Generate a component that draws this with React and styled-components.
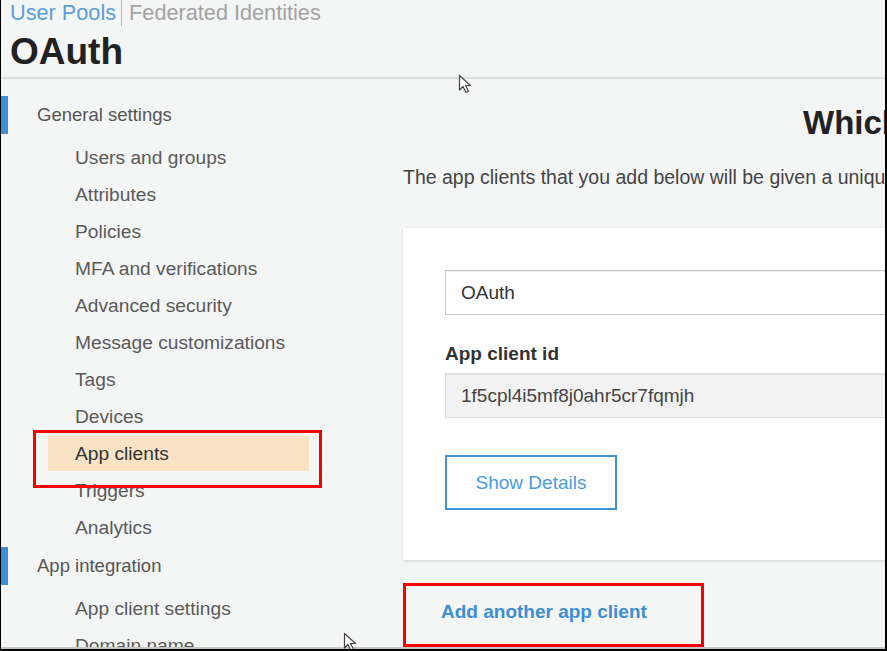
import React from 'react';
import styled, { createGlobalStyle } from 'styled-components';

const GlobalStyle = createGlobalStyle`
  body {
    margin: 0;
    background: #fff;
    font-family: "Liberation Sans", Arial, sans-serif;
  }
`;

const Frame = styled.div`
  position: relative;
  width: 887px;
  height: 651px;
  box-sizing: border-box;
  border-left: 1px solid #000;
  border-right: 2px solid #000;
  border-bottom: 2px solid #000;
  overflow: hidden;
`;

const Page = styled.div`
  height: 100%;
  box-sizing: border-box;
  background: #f4f5f5;
  border-bottom: 2px solid #c4c4c4;
  overflow: hidden;
  display: flex;
  flex-direction: column;
`;

const Header = styled.header`
  padding-left: 9px;
  padding-bottom: 4px;
  border-bottom: 2px solid #dcdddd;
`;

const TopNav = styled.div`
  display: flex;
  align-items: center;
  height: 26px;
  font-size: 21.7px;
  line-height: 26px;
`;

const NavLink = styled.span`
  color: ${(p) => (p.$active ? '#5b9fdb' : '#a3a3a3')};
  ${(p) =>
    p.$divided &&
    `
    margin-left: 5px;
    padding-left: 7px;
    border-left: 1.5px solid #b9b9b9;
  `}
`;

const Title = styled.h1`
  margin: 4px 0 0;
  font-size: 37px;
  line-height: 43px;
  font-weight: bold;
  color: #222;
`;

const Body = styled.div`
  display: flex;
  flex: 1;
  min-height: 0;
`;

const Sidebar = styled.nav`
  width: 390px;
  flex-shrink: 0;
  padding-top: 17px;
`;

const Group = styled.div`
  margin-bottom: 1px;
`;

const GroupTitle = styled.div`
  position: relative;
  height: 38px;
  line-height: 38px;
  padding-left: 36px;
  margin-bottom: 5px;
  font-size: 18.5px;
  color: #555;

  &::before {
    content: '';
    position: absolute;
    left: 0;
    top: 0;
    bottom: 0;
    width: 7px;
    background: #3c8fd8;
  }
`;

const SubItem = styled.div`
  height: 37px;
  display: flex;
  align-items: center;
`;

const SubLabel = styled.span`
  margin-left: 47px;
  width: 234px;
  height: 35px;
  line-height: 35px;
  padding-left: 27px;
  font-size: 19.2px;
  color: ${(p) => (p.$selected ? '#333' : '#5a5a5a')};
  background: ${(p) => (p.$selected ? '#f9e3c4' : 'transparent')};
`;

const Main = styled.main`
  flex: 1;
  min-width: 0;
  padding-left: 12px;
  overflow: hidden;
`;

const Inner = styled.div`
  width: 1000px;
`;

const Heading = styled.h2`
  margin: 24px 0 0;
  padding-left: 400px;
  font-size: 33px;
  line-height: 40px;
  font-weight: bold;
  color: #222;
  white-space: nowrap;
`;

const Intro = styled.p`
  margin: 22px 0 0;
  font-size: 19.5px;
  line-height: 24px;
  color: #444;
  white-space: nowrap;
`;

const Card = styled.section`
  margin-top: 39px;
  padding: 42px 0 50px 42px;
  background: #fff;
  box-shadow: 0 1px 3px rgba(0, 0, 0, 0.14);
`;

const Field = styled.div`
  height: 45px;
  box-sizing: border-box;
  display: flex;
  align-items: center;
  padding-left: 15px;
  font-size: 19px;
  color: ${(p) => (p.$readOnly ? '#444' : '#333')};
  background: ${(p) => (p.$readOnly ? '#f2f2f2' : '#fff')};
  border: 1px solid ${(p) => (p.$readOnly ? '#dcdcdc' : '#c6c6c6')};
  box-shadow: inset 0 1px 1px rgba(0, 0, 0, 0.06);
`;

const FieldLabel = styled.div`
  margin: 26px 0 6px;
  font-size: 19px;
  line-height: 26px;
  font-weight: bold;
  color: #333;
`;

const OutlineButton = styled.button`
  margin-top: 37px;
  width: 172px;
  height: 55px;
  box-sizing: border-box;
  border: 2px solid #3f92d6;
  background: #fff;
  color: #4b9bdb;
  font-family: inherit;
  font-size: 19px;
  display: block;
`;

const AddLink = styled.a`
  display: inline-block;
  margin-top: 40px;
  padding-left: 38px;
  font-size: 19px;
  line-height: 24px;
  font-weight: bold;
  color: #3d8ed3;
  text-decoration: none;
`;

const Annotation = styled.div`
  position: absolute;
  box-sizing: border-box;
  border: 3px solid #f50000;
  pointer-events: none;
`;

const Pointer = styled.svg`
  position: absolute;
  width: 15px;
  height: 20px;
`;

const Cursor = ({ x, y }) => (
  <Pointer style={{ left: x, top: y }} viewBox="0 0 15 20">
    <path
      d="M1.5 1.5 L1.5 16 L5 12.5 L8 18.5 L10.5 17.3 L7.6 11.5 L12.5 11.5 Z"
      fill="#fff"
      stroke="#444"
      strokeWidth="1.2"
      strokeLinejoin="round"
    />
  </Pointer>
);

const general = [
  'Users and groups',
  'Attributes',
  'Policies',
  'MFA and verifications',
  'Advanced security',
  'Message customizations',
  'Tags',
  'Devices',
  'App clients',
  'Triggers',
  'Analytics',
];

const integration = ['App client settings', 'Domain name'];

const App = () => {
  return (
    <>
      <GlobalStyle />
      <Frame>
        <Page>
          <Header>
            <TopNav>
              <NavLink $active>User Pools</NavLink>
              <NavLink $divided>Federated Identities</NavLink>
            </TopNav>
            <Title>OAuth</Title>
          </Header>
          <Body>
            <Sidebar>
              <Group>
                <GroupTitle>General settings</GroupTitle>
                {general.map((item) => (
                  <SubItem key={item}>
                    <SubLabel $selected={item === 'App clients'}>{item}</SubLabel>
                  </SubItem>
                ))}
              </Group>
              <Group>
                <GroupTitle>App integration</GroupTitle>
                {integration.map((item) => (
                  <SubItem key={item}>
                    <SubLabel>{item}</SubLabel>
                  </SubItem>
                ))}
              </Group>
            </Sidebar>
            <Main>
              <Inner>
                <Heading>Which app clients will have access to this user pool?</Heading>
                <Intro>
                  The app clients that you add below will be given a unique ID and an optional
                  secret key to access this user pool.
                </Intro>
                <Card>
                  <Field>OAuth</Field>
                  <FieldLabel>App client id</FieldLabel>
                  <Field $readOnly>1f5cpl4i5mf8j0ahr5cr7fqmjh</Field>
                  <OutlineButton>Show Details</OutlineButton>
                </Card>
                <AddLink href="#">Add another app client</AddLink>
              </Inner>
            </Main>
          </Body>
        </Page>
        <Annotation style={{ left: 32, top: 430, width: 289, height: 58 }} />
        <Annotation style={{ left: 402, top: 583, width: 301, height: 64 }} />
        <Cursor x={457} y={74} />
        <Cursor x={342} y={632} />
      </Frame>
    </>
  );
};

export default App;
